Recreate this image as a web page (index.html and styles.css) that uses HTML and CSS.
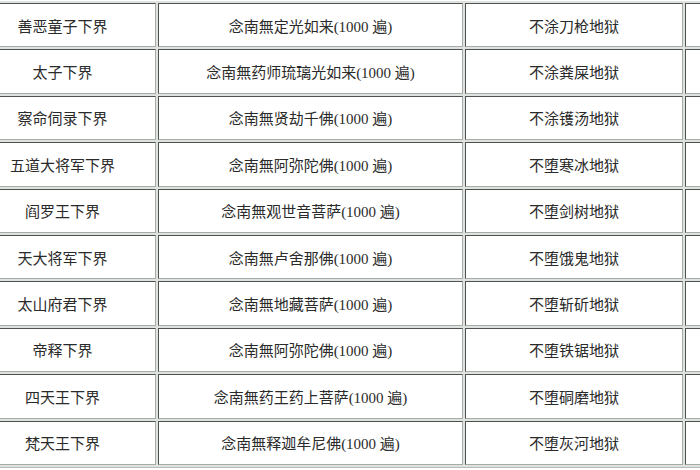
FILE: index.html
```html
<!DOCTYPE html>
<html lang="zh-CN">
<head>
<meta charset="utf-8">
<title>下界表</title>
<link rel="stylesheet" href="styles.css">
</head>
<body>
<div class="frame">
<table class="grid">
  <colgroup>
    <col class="c1"><col class="c2"><col class="c3"><col class="c4">
  </colgroup>
  <tbody>
    <tr><td>善恶童子下界</td><td>念南無定光如来(1000 遍)</td><td>不涂刀枪地狱</td><td></td></tr>
    <tr><td>太子下界</td><td>念南無药师琉璃光如来(1000 遍)</td><td>不涂粪屎地狱</td><td></td></tr>
    <tr><td>察命伺录下界</td><td>念南無贤劫千佛(1000 遍)</td><td>不涂镬汤地狱</td><td></td></tr>
    <tr><td>五道大将军下界</td><td>念南無阿弥陀佛(1000 遍)</td><td>不堕寒冰地狱</td><td></td></tr>
    <tr><td>阎罗王下界</td><td>念南無观世音菩萨(1000 遍)</td><td>不堕剑树地狱</td><td></td></tr>
    <tr><td>天大将军下界</td><td>念南無卢舍那佛(1000 遍)</td><td>不堕饿鬼地狱</td><td></td></tr>
    <tr><td>太山府君下界</td><td>念南無地藏菩萨(1000 遍)</td><td>不堕斩斫地狱</td><td></td></tr>
    <tr><td>帝释下界</td><td>念南無阿弥陀佛(1000 遍)</td><td>不堕铁锯地狱</td><td></td></tr>
    <tr><td>四天王下界</td><td>念南無药王药上菩萨(1000 遍)</td><td>不堕硐磨地狱</td><td></td></tr>
    <tr><td>梵天王下界</td><td>念南無释迦牟尼佛(1000 遍)</td><td>不堕灰河地狱</td><td></td></tr>
  </tbody>
</table>
</div>
</body>
</html>
```
FILE: styles.css
```css
html, body {
  margin: 0;
  padding: 0;
  background: #ffffff;
  overflow: hidden;
}

.frame {
  width: 700px;
  height: 470px;
  overflow: hidden;
}

.grid {
  margin: 1px 0 0 -33px;
  table-layout: fixed;
  border-collapse: separate;
  border-spacing: 2px;
  background: #dfe3df;
  border-bottom: 1px solid #b8bcb8;
  width: 1000px;
  font-family: "Liberation Serif", "Noto Sans CJK SC", serif;
  font-size: 15px;
  color: #2a2a2a;
}

.c1 { width: 187px; }
.c2 { width: 305px; }
.c3 { width: 218px; }
.c4 { width: 280px; }

.grid td {
  height: 42.4px;
  padding: 0;
  text-align: center;
  vertical-align: middle;
  background: #ffffff;
  border-style: solid;
  border-width: 1px;
  border-color: #4e524e #a8aca8 #a8aca8 #4e524e;
  white-space: nowrap;
}
```
